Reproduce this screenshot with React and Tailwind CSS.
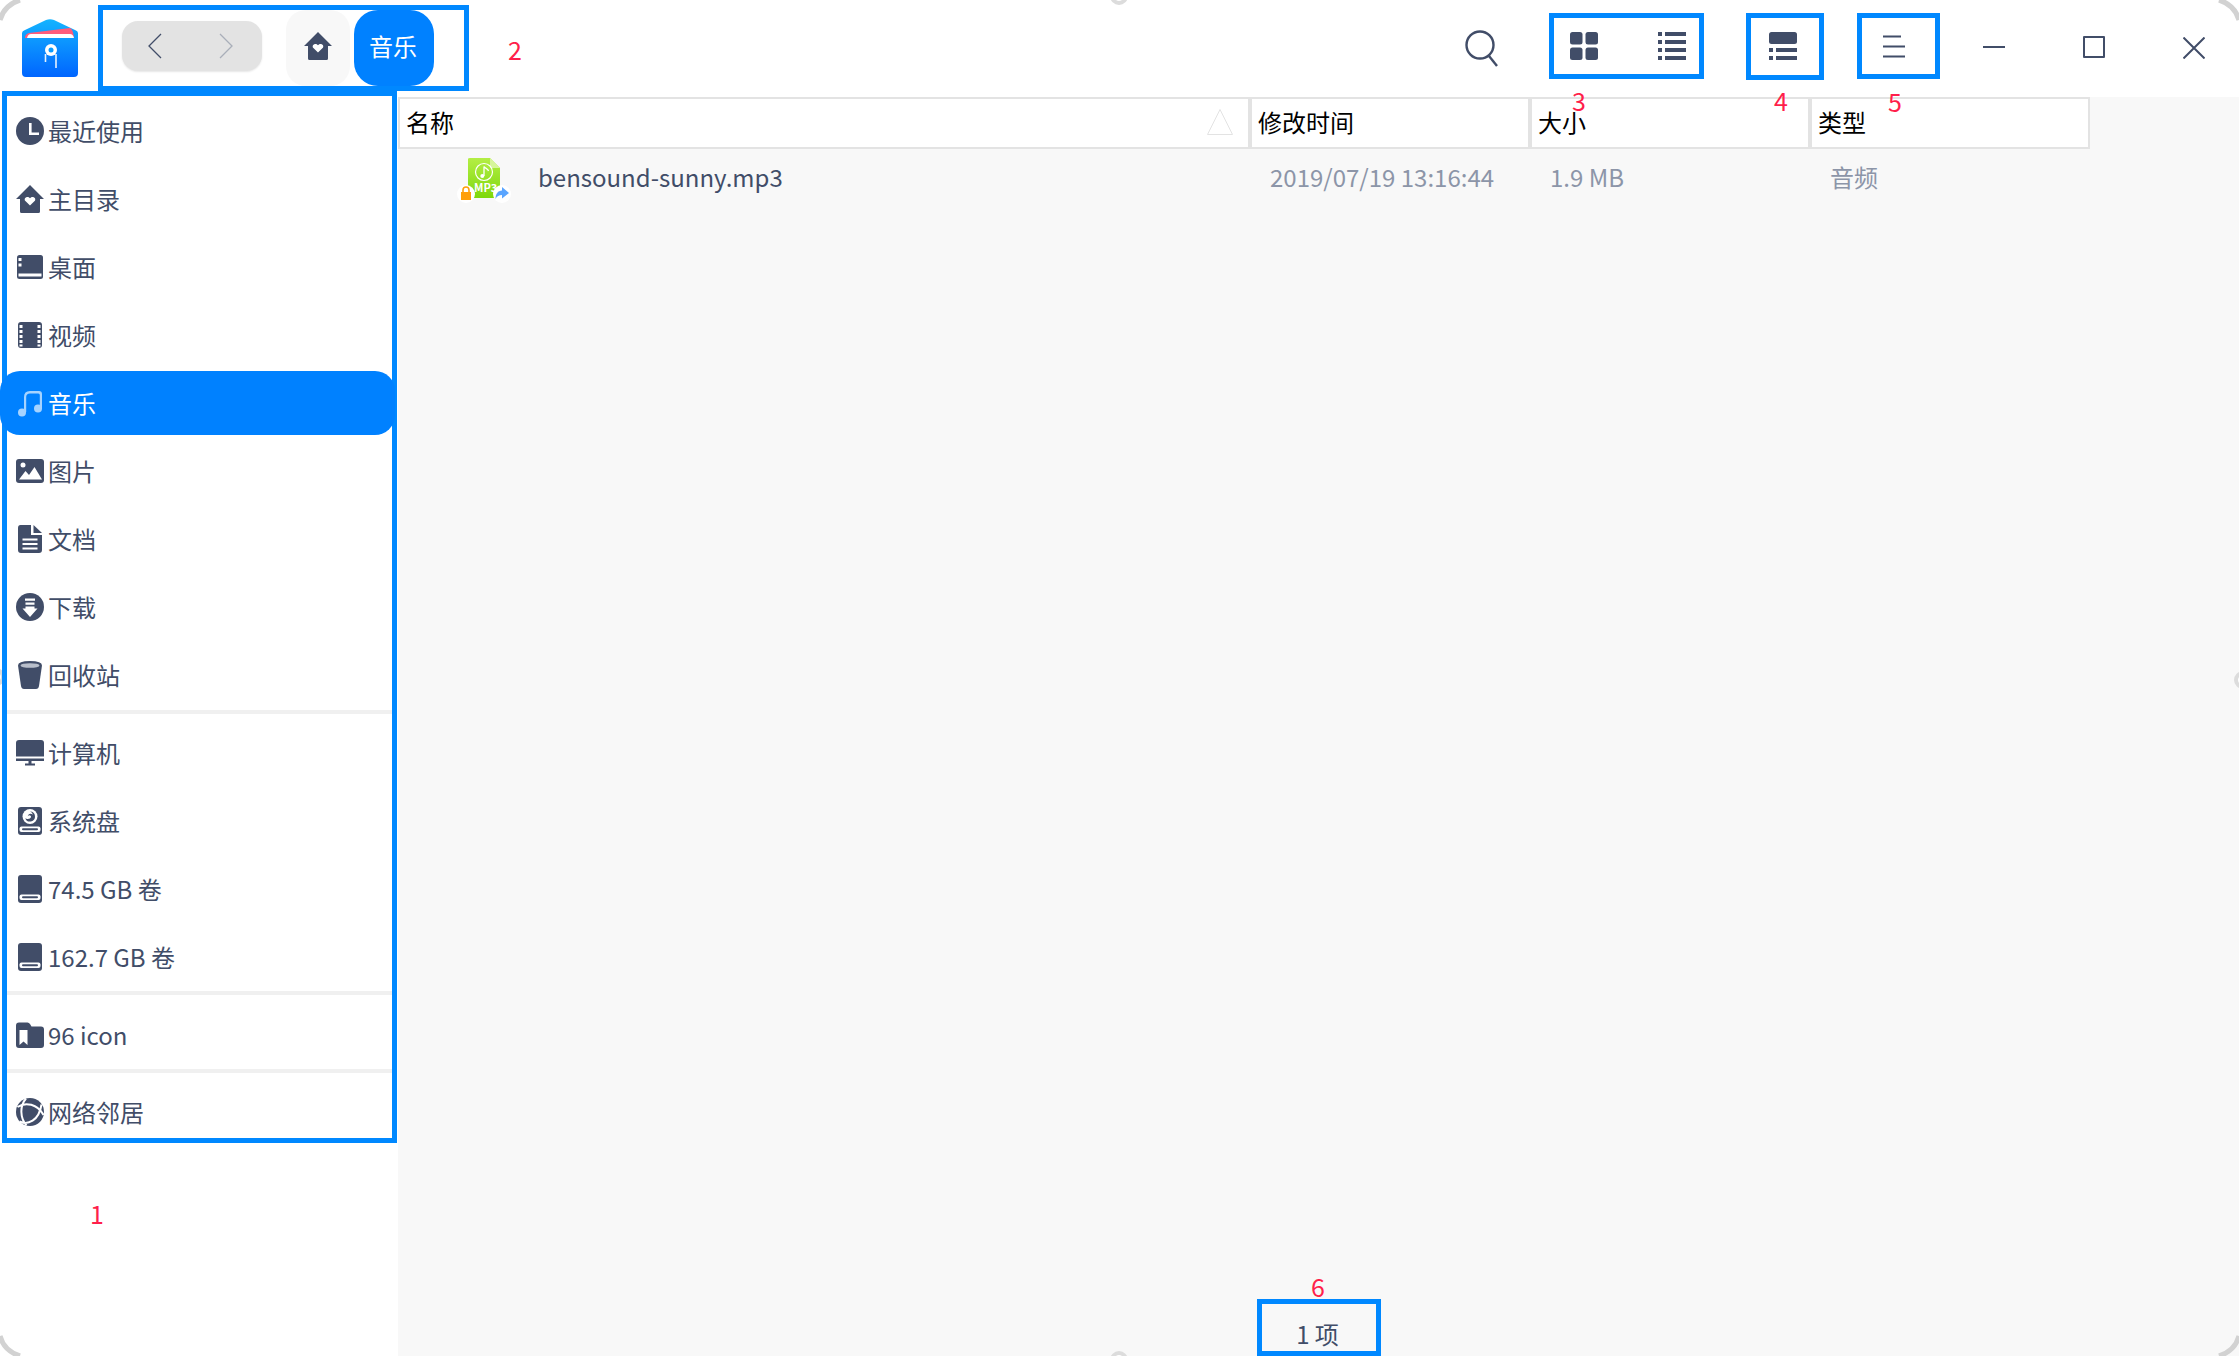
import React from 'react';

const Svg = ({ children, className = 'text-[#414d68]' }) => (
  <svg viewBox="0 0 28 28" className={`w-[28px] h-[28px] shrink-0 ${className}`} fill="currentColor">
    {children}
  </svg>
);

const ClockIcon = () => (
  <Svg>
    <circle cx="14" cy="14" r="14" />
    <path d="M13 6h2.600v9.400H23V18H13z" fill="#fff" />
  </Svg>
);
const HeartPath = 'M14 20.500l-4.600-4.400c-2.400-2.600 1.900-6 4.600-2.800 2.700-3.200 7 .2 4.600 2.800z';
const HomeIcon = () => (
  <Svg>
    <path d="M14 0L28 14h-4v12.500q0 1.500-1.500 1.500h-17Q4 28 4 26.500V14H0z" />
    <path d={HeartPath} fill="#fff" />
  </Svg>
);
const DesktopIcon = () => (
  <Svg>
    <rect x="1" y="2" width="26" height="24" rx="2.500" />
    <path d="M2.500 5h3v3h-3zM2.500 10.500h3v3h-3zM2.500 20.500h23V23.500h-23z" fill="#fff" />
  </Svg>
);
const VideoIcon = () => (
  <Svg>
    <rect x="2" y="1" width="24" height="26" rx="3" />
    <path d="M3.500 4h3v3h-3zM3.500 9h3v3h-3zM3.500 14h3v3h-3zM3.500 19h3v3h-3zM3.500 23.500h3v2h-3zM21.500 4h3v3h-3zM21.500 9h3v3h-3zM21.500 14h3v3h-3zM21.500 19h3v3h-3zM21.500 23.500h3v2h-3z" fill="#fff" />
  </Svg>
);
const MusicIcon = () => (
  <Svg className="text-[#a6d3ff]">
    <circle cx="6" cy="23.500" r="4" />
    <circle cx="22" cy="19.500" r="4" />
    <path d="M8 23V8q0-6 6-6h9q3 0 3 3v15h-2.200V6q0-1.500-1.500-1.500H14Q10.200 4.500 10.200 8v15z" />
  </Svg>
);
const PictureIcon = () => (
  <Svg>
    <rect x="0" y="2" width="28" height="24" rx="3" />
    <circle cx="7" cy="8" r="2.500" fill="#fff" />
    <path d="M3 22.500l6.500-8.500 3.500 4 5.500-8L26 22.500z" fill="#fff" />
  </Svg>
);
const DocIcon = () => (
  <Svg>
    <path d="M4.500 0H15v10h11v15q0 3-3 3H5q-3 0-3-3V3q0-3 2.500-3z" />
    <path d="M17.500 0L26 8h-8.500z" />
    <path d="M6.500 13.500h15v2h-15zM6.500 18h15v2h-15zM6.500 22.500h15v2h-15z" fill="#fff" />
  </Svg>
);
const DownloadIcon = () => (
  <Svg>
    <circle cx="14" cy="14" r="14" />
    <path d="M9 5.500h10v2.200H9zM9.500 9.500h9v2.200h-9zM9.500 13.500h9v2h3L14 24 6.500 15.500h3z" fill="#fff" />
  </Svg>
);
const TrashIcon = () => (
  <Svg>
    <path d="M2 4.500Q2 0 14 0t12 4.500L23 25q-.5 3-3 3H8q-2.500 0-3-3z" />
    <ellipse cx="14" cy="4.500" rx="9.500" ry="2.300" fill="#b9bfcb" />
  </Svg>
);
const ComputerIcon = () => (
  <Svg>
    <path d="M3 1h22q3 0 3 3v13.500H0V4q0-3 3-3z" />
    <path d="M0 19.500h28V22H0zM9 24.500h10v2H9z" />
    <path d="M12.500 21h3v4h-3z" />
  </Svg>
);
const DiskSlot = () => (
  <>
    <rect x="3.500" y="19.500" width="21" height="5.500" rx="2" fill="#fff" />
    <rect x="6" y="21.300" width="16" height="2" rx="1" />
  </>
);
const SystemDiskIcon = () => (
  <Svg>
    <rect x="2" y="0" width="24" height="28" rx="3" />
    <circle cx="14" cy="9.500" r="7.500" fill="#fff" />
    <path d="M14 4.500a5 5 0 1 1-4.800 6.400c1.600 1.800 5.400 1.300 5.800-.9.300-1.700-2.400-2.500-3.200-.8.100-2.500 3.300-3.200 5-1.500-.4-1.700-1.600-2.900-2.800-3.200z" />
    <DiskSlot />
  </Svg>
);
const DiskIcon = () => (
  <Svg>
    <rect x="2" y="0" width="24" height="28" rx="3" />
    <DiskSlot />
  </Svg>
);
const FolderIcon = () => (
  <Svg>
    <path d="M3 1.500h8.500q1.500 0 2.500 1.500l1.500 2.500H25q3 0 3 3V24q0 3-3 3H3q-3 0-3-3V4.500q0-3 3-3z" />
    <path d="M3.500 9h8v15l-4-3.500-4 3.500z" fill="#fff" />
  </Svg>
);
const NetworkIcon = () => (
  <Svg>
    <circle cx="14" cy="14" r="14" />
    <path d="M10 0.500C3.500 8 4 20 10.500 27.500M1.500 9C9.500 3.500 21.500 6 27.500 17M3.500 23.500C11.500 27.500 23 23 25.500 6.500" fill="none" stroke="#fff" strokeWidth="2" />
  </Svg>
);

const groups = [
  [
    ['最近使用', ClockIcon],
    ['主目录', HomeIcon],
    ['桌面', DesktopIcon],
    ['视频', VideoIcon],
    ['音乐', MusicIcon, true],
    ['图片', PictureIcon],
    ['文档', DocIcon],
    ['下载', DownloadIcon],
    ['回收站', TrashIcon],
  ],
  [
    ['计算机', ComputerIcon],
    ['系统盘', SystemDiskIcon],
    ['74.5 GB 卷', DiskIcon],
    ['162.7 GB 卷', DiskIcon],
  ],
  [['96 icon', FolderIcon]],
  [['网络邻居', NetworkIcon]],
];

// gap under each separator, hand tuned against the screenshot
const sepClass = ['', 'mt-[1px] mb-[5px]', 'mb-[6px]', 'mb-[5px]'];

const SideRow = ({ label, Icon, active }) => {
  if (active) {
    return (
      <div className="relative z-10 -ml-[7px] -mr-[3px] h-[64px] my-[2px] pl-[16px] flex items-center gap-[4px] rounded-[20px] bg-[#0081ff] text-white">
        <Icon />
        <span>{label}</span>
      </div>
    );
  }
  return (
    <div className="h-[68px] pl-[9px] flex items-center gap-[4px] text-[#414d68]">
      <Icon />
      <span>{label}</span>
    </div>
  );
};

const Mark = ({ className, children }) => (
  <span className={`absolute z-20 text-[25px] leading-none text-[#ff1f4b] ${className}`}>{children}</span>
);

const Ring = ({ className }) => (
  <div className={`absolute z-0 w-[18px] h-[18px] rounded-full border-[4px] border-[#dcdcdc] bg-white ${className}`} />
);

const Columns = [
  ['修改时间', 'w-[280px]'],
  ['大小', 'w-[280px]'],
  ['类型', 'w-[280px]'],
];

export default function App() {
  return (
    <div className="relative w-[2239px] h-[1356px] overflow-hidden bg-white flex flex-col text-[24px] leading-[32px] font-['Noto_Sans_CJK_SC','Noto_Sans',sans-serif]">
      {/* title bar */}
      <header className="h-[97px] shrink-0 flex items-center">
        <svg viewBox="0 0 56 58" className="w-[56px] h-[58px] ml-[22px] -mt-[1px] shrink-0">
          <defs>
            <linearGradient id="logoBlue" x1="0" y1="0" x2="0" y2="1">
              <stop offset="0" stopColor="#14b4ff" />
              <stop offset="1" stopColor="#0065ff" />
            </linearGradient>
          </defs>
          <path d="M0 14Q0 12 3 11L24 1Q28 -0.500 32 1L53 11Q56 12 56 14V54Q56 58 52 58H4Q0 58 0 54Z" fill="url(#logoBlue)" />
          <path d="M3 19Q3 15 7 14L48 9Q51 10 52 19Z" fill="#ff5c7c" />
          <path d="M5 19Q6 15 9 15H48Q51 15 52 19Z" fill="#fff" />
          <circle cx="29" cy="31" r="6" fill="#fff" />
          <circle cx="29" cy="31" r="2.500" fill="#0a9cff" />
          <path d="M23.500 35V43M34 35V49" stroke="#fff" strokeWidth="1.600" opacity="0.900" />
        </svg>

        <div className="ml-[20px] -mt-[2px] w-[371px] h-[86px] border-[5px] border-[#0088ff] flex items-center pl-[19px]">
          <div className="w-[140px] h-[50px] -mt-[3px] rounded-[16px] bg-[#e3e3e3] shadow-[0_1px_2px_rgba(0,0,0,0.1)] flex items-center pl-[26px]">
            <svg viewBox="0 0 14 26" className="w-[14px] h-[26px] text-[#414d68]" fill="none" stroke="currentColor" strokeWidth="1.300">
              <path d="M13 1L1 13l12 12" />
            </svg>
            <svg viewBox="0 0 14 26" className="ml-[57px] w-[14px] h-[26px] text-[#a9aeb9]" fill="none" stroke="currentColor" strokeWidth="1.300">
              <path d="M1 1l12 12L1 25" />
            </svg>
          </div>
          <div className="ml-[24px] w-[64px] h-[76px] rounded-[20px] bg-[#f8f8f8] pb-[4px] flex items-center justify-center">
            <HomeIcon />
          </div>
          <div className="ml-[4px] w-[80px] h-[76px] rounded-[24px] bg-[#0081ff] text-white pb-[4px] pr-[2px] flex items-center justify-center">
            音乐
          </div>
        </div>

        <div className="flex-1" />

        <svg viewBox="0 0 36 40" className="w-[36px] h-[40px] -mt-[2px] text-[#414d68]" fill="none" stroke="currentColor" strokeWidth="2.400">
          <circle cx="16" cy="17" r="13.500" />
          <path d="M25 28l8 10" />
        </svg>

        <div className="ml-[49px] -mt-[5px] w-[155px] h-[66px] border-[5px] border-[#0088ff] flex items-center pl-[16px] text-[#414d68]">
          <svg viewBox="0 0 28 28" className="w-[28px] h-[28px]" fill="currentColor">
            <rect x="0" y="0" width="12.500" height="12.500" rx="2.500" />
            <rect x="15.500" y="0" width="12.500" height="12.500" rx="2.500" />
            <rect x="0" y="15.500" width="12.500" height="12.500" rx="2.500" />
            <rect x="15.500" y="15.500" width="12.500" height="12.500" rx="2.500" />
          </svg>
          <svg viewBox="0 0 28 28" className="ml-[60px] w-[28px] h-[28px]" fill="currentColor">
            <path d="M0 0h4v4H0zM7 0h21v4H7zM0 8h4v4H0zM7 8h21v4H7zM0 16h4v4H0zM7 16h21v4H7zM0 24h4v4H0zM7 24h21v4H7z" />
          </svg>
        </div>

        <div className="ml-[42px] -mt-[5px] w-[78px] h-[67px] border-[5px] border-[#0088ff] pr-[5px] flex items-center justify-center text-[#414d68]">
          <svg viewBox="0 0 28 28" className="w-[28px] h-[28px]" fill="currentColor">
            <rect x="0" y="0" width="28" height="12" rx="2.500" />
            <path d="M0 16h4v4H0zM7 16h21v4H7zM0 24h4v4H0zM7 24h21v4H7z" />
          </svg>
        </div>

        <div className="ml-[33px] -mt-[5px] w-[83px] h-[66px] border-[5px] border-[#0088ff] pr-[9px] flex items-center justify-center text-[#414d68]">
          <svg viewBox="0 0 24 24" className="w-[24px] h-[24px]" fill="currentColor">
            <path d="M1 1.500h18v2H1zM1 11.500h22v2H1zM1 21.500h22v2H1z" />
          </svg>
        </div>

        <div className="ml-[43px] w-[22px] h-[22px] -mt-[3px] flex items-center">
          <div className="w-full h-[2px] bg-[#414d68]" />
        </div>
        <div className="ml-[78px] w-[22px] h-[22px] -mt-[3px] border-2 border-[#414d68] rounded-[1px]" />
        <svg viewBox="0 0 22 22" className="ml-[78px] mr-[34px] w-[22px] h-[22px] -mt-[1px] text-[#414d68]" fill="none" stroke="currentColor" strokeWidth="2">
          <path d="M0.500 0.500l21 21M21.500 0.500l-21 21" />
        </svg>
      </header>

      <div className="flex-1 flex min-h-0">
        {/* sidebar */}
        <aside className="w-[398px] shrink-0">
          <nav className="relative z-10 -mt-[6px] ml-[2px] w-[395px] h-[1052px] pt-[1px] border-[5px] border-[#0088ff]">
            {groups.map((group, i) => (
              <div key={i}>
                {i > 0 && <div className={`h-[4px] bg-[#f0f0f0] ${sepClass[i]}`} />}
                {group.map(([label, Icon, active]) => (
                  <SideRow key={label} label={label} Icon={Icon} active={active} />
                ))}
              </div>
            ))}
          </nav>
        </aside>

        {/* file list */}
        <main className="flex-1 min-w-0 bg-[#f8f8f8] flex flex-col">
          <div className="flex h-[52px] w-[1692px] shrink-0 text-black">
            <div className="flex-1 bg-white border-2 border-[#e3e3e3] pl-[6px] pb-[2px] flex items-center justify-between pr-[14px]">
              <span>名称</span>
              <svg viewBox="0 0 28 28" className="w-[28px] h-[28px]" fill="none" stroke="#e3e3e3" strokeWidth="1">
                <path d="M14 1.500L1.500 26.500h25z" />
              </svg>
            </div>
            {Columns.map(([title, width]) => (
              <div key={title} className={`${width} bg-white border-2 border-[#e3e3e3] pl-[6px] pb-[2px] flex items-center`}>
                {title}
              </div>
            ))}
          </div>

          <div className="flex-1 min-h-0">
            <div className="flex w-[1692px] h-[56px] items-center text-[#8c95a8]">
              <div className="flex-1 flex items-center pl-[57px]">
                <span className="relative w-[56px] h-[46px] mt-[8px] shrink-0">
                  <svg viewBox="0 0 56 46" className="w-[56px] h-[46px]">
                    <defs>
                      <linearGradient id="mp3Green" x1="0" y1="0" x2="0" y2="1">
                        <stop offset="0" stopColor="#b4ee45" />
                        <stop offset="1" stopColor="#7ed80c" />
                      </linearGradient>
                    </defs>
                    <path d="M13 1q0-1 2-1h20l10 10v27q0 3-3 3H15q-2 0-2-3z" fill="url(#mp3Green)" />
                    <path d="M35 0l10 10h-8q-2 0-2-2z" fill="#d6f59b" />
                    <circle cx="29" cy="14" r="8.500" fill="none" stroke="#fff" strokeWidth="1.200" />
                    <path d="M29 18V8.500c1 2 4 2 4.500 4.500" fill="none" stroke="#fff" strokeWidth="1.300" />
                    <circle cx="27.300" cy="18" r="2" fill="#fff" />
                    <circle cx="11" cy="36" r="9" fill="#fff" />
                    <rect x="6" y="34" width="10" height="8" fill="#ff9f0a" />
                    <path d="M8 34v-2a3 3 0 0 1 6 0v2" fill="none" stroke="#ff9f0a" strokeWidth="1.600" />
                    <circle cx="47" cy="36" r="9" fill="#fff" />
                    <path d="M47 29l7 6-7 5.500V37c-3 0-5 1-6.500 4 0-5 2.500-8.500 6.500-8.500z" fill="#5aa5ff" />
                  </svg>
                  <span className="absolute left-[19px] top-[23px] text-[11px] leading-[12px] font-bold text-white">MP3</span>
                </span>
                <span className="ml-[27px] text-[#414d68]">bensound-sunny.mp3</span>
              </div>
              <div className="w-[280px] pl-[20px] whitespace-nowrap">2019/07/19 13:16:44</div>
              <div className="w-[280px] pl-[20px]">1.9 MB</div>
              <div className="w-[280px] pl-[20px]">音频</div>
            </div>
          </div>

          <footer className="h-[57px] shrink-0 flex justify-center">
            <div className="w-[124px] border-[5px] border-[#0088ff] pt-[14px] pr-[2px] text-center text-[#414d68]">1 项</div>
          </footer>
        </main>
      </div>

      {/* numbered call-outs */}
      <Mark className="left-[90px] top-[1201px]">1</Mark>
      <Mark className="left-[508px] top-[37px]">2</Mark>
      <Mark className="left-[1572px] top-[88px]">3</Mark>
      <Mark className="left-[1774px] top-[88px]">4</Mark>
      <Mark className="left-[1888px] top-[89px]">5</Mark>
      <Mark className="left-[1311px] top-[1274px]">6</Mark>

      {/* window resize handles and corners */}
      <Ring className="left-[1110px] -top-[13px]" />
      <Ring className="left-[1110px] -bottom-[13px]" />
      <Ring className="-left-[13px] top-[668px]" />
      <Ring className="-right-[13px] top-[671px]" />
      <svg viewBox="0 0 24 24" className="absolute left-0 top-0 w-[24px] h-[24px]" fill="none" stroke="#d2d2d2" strokeWidth="5">
        <path d="M0 20Q4 5 20 0" />
      </svg>
      <svg viewBox="0 0 24 24" className="absolute right-0 top-0 w-[24px] h-[24px]" fill="none" stroke="#d2d2d2" strokeWidth="5">
        <path d="M24 20Q20 5 4 0" />
      </svg>
      <svg viewBox="0 0 24 24" className="absolute left-0 bottom-0 w-[24px] h-[24px]" fill="none" stroke="#d2d2d2" strokeWidth="5">
        <path d="M0 4Q4 19 20 24" />
      </svg>
      <svg viewBox="0 0 24 24" className="absolute right-0 bottom-0 w-[24px] h-[24px]" fill="none" stroke="#d2d2d2" strokeWidth="5">
        <path d="M24 4Q20 19 4 24" />
      </svg>
    </div>
  );
}
